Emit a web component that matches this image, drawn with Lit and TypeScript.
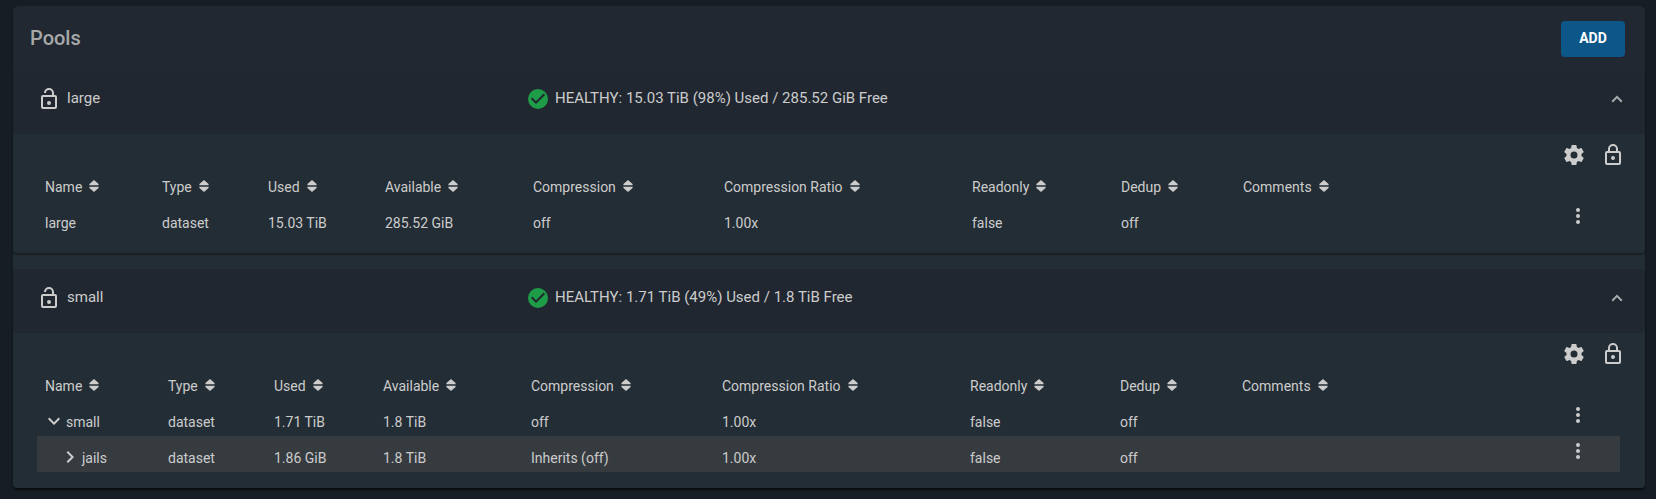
import { LitElement, html, css, svg, nothing } from "lit";
import { customElement, property, state } from "lit/decorators.js";

interface Dataset {
  name: string;
  level: number;
  tree?: "open" | "closed";
  hovered?: boolean;
  values: string[];
}

interface Pool {
  name: string;
  status: string;
  weights: number[];
  datasets: Dataset[];
}

const COLUMNS = [
  "Name",
  "Type",
  "Used",
  "Available",
  "Compression",
  "Compression Ratio",
  "Readonly",
  "Dedup",
  "Comments",
];

const POOLS: Pool[] = [
  {
    name: "large",
    status: "HEALTHY: 15.03 TiB (98%) Used / 285.52 GiB Free",
    weights: [117, 106, 117, 148, 191, 248, 149, 122, 120, 265],
    datasets: [
      {
        name: "large",
        level: 0,
        values: ["dataset", "15.03 TiB", "285.52 GiB", "off", "1.00x", "false", "off", ""],
      },
    ],
  },
  {
    name: "small",
    status: "HEALTHY: 1.71 TiB (49%) Used / 1.8 TiB Free",
    weights: [123, 106, 109, 148, 191, 248, 150, 122, 120, 266],
    datasets: [
      {
        name: "small",
        level: 0,
        tree: "open",
        values: ["dataset", "1.71 TiB", "1.8 TiB", "off", "1.00x", "false", "off", ""],
      },
      {
        name: "jails",
        level: 1,
        tree: "closed",
        hovered: true,
        values: ["dataset", "1.86 GiB", "1.8 TiB", "Inherits (off)", "1.00x", "false", "off", ""],
      },
    ],
  },
];

const ICONS = {
  unlocked: svg`<path d="M12 18a2 2 0 1 0 0-4 2 2 0 0 0 0 4zM18 8h-1V6A5 5 0 0 0 7 6h2a3 3 0 0 1 6 0v2H6a2 2 0 0 0-2 2v10a2 2 0 0 0 2 2h12a2 2 0 0 0 2-2V10a2 2 0 0 0-2-2zm0 12H6V10h12z"/>`,
  locked: svg`<path d="M12 17a2 2 0 1 0 0-4 2 2 0 0 0 0 4zM18 8h-1V6A5 5 0 0 0 7 6v2H6a2 2 0 0 0-2 2v10a2 2 0 0 0 2 2h12a2 2 0 0 0 2-2V10a2 2 0 0 0-2-2zM9 6a3 3 0 0 1 6 0v2H9zm9 14H6V10h12z"/>`,
  gear: svg`<path d="M19.43 12.98c.04-.32.07-.64.07-.98s-.03-.66-.07-.98l2.11-1.65c.19-.15.24-.42.12-.64l-2-3.46c-.12-.22-.39-.3-.61-.22l-2.49 1c-.52-.4-1.08-.73-1.69-.98l-.38-2.65A.49.49 0 0 0 14 2h-4c-.25 0-.46.18-.49.42l-.38 2.65c-.61.25-1.17.59-1.69.98l-2.49-1c-.23-.09-.49 0-.61.22l-2 3.46c-.13.22-.07.49.12.64l2.11 1.65c-.04.32-.07.65-.07.98s.03.66.07.98l-2.11 1.65c-.19.15-.24.42-.12.64l2 3.46c.12.22.39.3.61.22l2.49-1c.52.4 1.08.73 1.69.98l.38 2.65c.03.24.24.42.49.42h4c.25 0 .46-.18.49-.42l.38-2.65c.61-.25 1.17-.59 1.69-.98l2.49 1c.23.09.49 0 .61-.22l2-3.46c.12-.22.07-.49-.12-.64zM12 15.500a3.500 3.500 0 1 1 0-7 3.500 3.500 0 0 1 0 7z"/>`,
  check: svg`<path d="M12 2a10 10 0 1 0 0 20 10 10 0 0 0 0-20zm-2 15l-5-5 1.410-1.410L10 14.170l7.590-7.590L19 8z"/>`,
  dots: svg`<path d="M12 8a2 2 0 1 0 0-4 2 2 0 0 0 0 4zm0 2a2 2 0 1 0 0 4 2 2 0 0 0 0-4zm0 6a2 2 0 1 0 0 4 2 2 0 0 0 0-4z"/>`,
  down: svg`<path d="M7.410 8.590L12 13.170l4.590-4.580L18 10l-6 6-6-6z"/>`,
  right: svg`<path d="M8.590 16.590L13.170 12 8.590 7.410 10 6l6 6-6 6z"/>`,
  collapse: svg`<path d="M12 8.500l5.500 5.500-1.400 1.400L12 11.300l-4.100 4.100L6.500 14z"/>`,
};

const icon = (name: keyof typeof ICONS) =>
  html`<svg class="icon icon-${name}" viewBox="0 0 24 24" aria-hidden="true">${ICONS[name]}</svg>`;

@customElement("pool-panel")
export class PoolPanel extends LitElement {
  @property({ attribute: false }) pool!: Pool;
  @state() private expanded = true;

  static styles = css`
    :host {
      display: block;
      background: #232d35;
      border-radius: 4px;
      box-shadow: 0 2px 2px rgba(0, 0, 0, 0.3);
    }
    button {
      display: inline-flex;
      align-items: center;
      margin: 0;
      padding: 0;
      border: 0;
      background: none;
      color: inherit;
      font: inherit;
      cursor: pointer;
    }
    .icon {
      display: block;
      width: 24px;
      height: 24px;
      fill: #cccccc;
    }
    .header {
      display: grid;
      grid-template-columns: 489fr 1079fr 24px;
      align-items: start;
      padding: 17px 16px 23px 24px;
      background: #202730;
      border-radius: 4px;
      font-size: 15px;
      line-height: 22px;
    }
    .title,
    .status {
      display: flex;
      align-items: flex-start;
    }
    .title {
      gap: 6px;
      margin: 0;
      font-size: inherit;
      font-weight: 400;
    }
    .status {
      gap: 5px;
    }
    .icon-check {
      fill: #1f9c48;
    }
    .icon-collapse {
      fill: #a9abad;
    }
    .content {
      padding-bottom: 16px;
    }
    .actions {
      display: flex;
      justify-content: flex-end;
      gap: 15px;
      padding: 9px 20px 0 24px;
    }
    .table-wrap {
      padding: 0 25px 0 24px;
    }
    table {
      width: 100%;
      table-layout: fixed;
      border-collapse: collapse;
      font-size: 14px;
      line-height: 20px;
    }
    th,
    td {
      height: 36px;
      box-sizing: border-box;
      padding: 12px 0 4px 8px;
      text-align: left;
      vertical-align: top;
      font-weight: 400;
      white-space: nowrap;
    }
    thead th,
    thead td {
      height: 34px;
      padding: 10px 0 4px 8px;
    }
    .sort {
      gap: 7px;
      vertical-align: top;
    }
    .sort-icon {
      width: 10px;
      height: 12px;
      margin-bottom: 2px;
      fill: #cccccc;
    }
    .hovered {
      background: #363b40;
    }
    .name {
      display: flex;
      align-items: center;
    }
    .tree {
      margin-left: -3px;
    }
    .level-1 {
      padding-left: 16px;
    }
    .tree button {
      height: 20px;
      margin-top: -2px;
    }
    td.menu {
      padding: 3px 30px 0 0;
    }
    .menu button {
      display: flex;
      margin-left: auto;
    }
  `;

  private toggle() {
    this.expanded = !this.expanded;
  }

  private renderRow(row: Dataset) {
    return html`
      <tr class=${row.hovered ? "hovered" : ""}>
        <td>
          <div class="name level-${row.level} ${row.tree ? "tree" : ""}">
            ${row.tree
              ? html`<button type="button" aria-label="Toggle ${row.name}">
                  ${icon(row.tree === "open" ? "down" : "right")}
                </button>`
              : nothing}
            <span>${row.name}</span>
          </div>
        </td>
        ${row.values.map((value) => html`<td>${value}</td>`)}
        <td class="menu">
          <button type="button" aria-label="Actions for ${row.name}">${icon("dots")}</button>
        </td>
      </tr>
    `;
  }

  private renderContent() {
    const { weights, datasets } = this.pool;
    const total = weights.reduce((sum, w) => sum + w, 0);
    return html`
      <div class="content">
        <div class="actions">
          <button type="button" aria-label="Pool settings">${icon("gear")}</button>
          <button type="button" aria-label="Encryption">${icon("locked")}</button>
        </div>
        <div class="table-wrap">
          <table>
            <colgroup>
              ${weights.map((w) => html`<col style="width: ${(w / total) * 100}%" />`)}
            </colgroup>
            <thead>
              <tr>
                ${COLUMNS.map(
                  (label) => html`<th scope="col">
                    <button class="sort" type="button">
                      ${label}
                      <svg class="sort-icon" viewBox="0 0 10 12" aria-hidden="true">
                        <path d="M5 0l4.600 4v1.200H.400V4zM5 12L.400 8V6.800h9.200V8z" />
                      </svg>
                    </button>
                  </th>`
                )}
                <td></td>
              </tr>
            </thead>
            <tbody>
              ${datasets.map((row) => this.renderRow(row))}
            </tbody>
          </table>
        </div>
      </div>
    `;
  }

  render() {
    return html`
      <div class="header">
        <h2 class="title">${icon("unlocked")}<span>${this.pool.name}</span></h2>
        <div class="status">${icon("check")}<span>${this.pool.status}</span></div>
        <button
          type="button"
          aria-label="Toggle pool ${this.pool.name}"
          aria-expanded=${this.expanded}
          @click=${this.toggle}
        >
          ${icon("collapse")}
        </button>
      </div>
      ${this.expanded ? this.renderContent() : nothing}
    `;
  }
}

@customElement("app-root")
export class AppRoot extends LitElement {
  static styles = css`
    :host {
      display: block;
      box-sizing: border-box;
      min-height: 100vh;
      padding: 6px 11px 11px 13px;
      background: #171d24;
      color: #cccccc;
      font-family: Roboto, sans-serif;
    }
    .card {
      background: #232d35;
      border-radius: 6px;
      box-shadow: 0 2px 2px rgba(0, 0, 0, 0.4);
    }
    .toolbar {
      display: flex;
      align-items: center;
      justify-content: space-between;
      padding: 15px 20px 13px 17px;
      background: #212831;
      border-radius: 6px 6px 0 0;
    }
    h1 {
      margin: 0 0 2px;
      color: #a6a8aa;
      font-size: 20px;
      font-weight: 500;
      line-height: 24px;
    }
    .add {
      height: 36px;
      min-width: 64px;
      padding: 0 16px 2px;
      border: 0;
      border-radius: 4px;
      background: #0d5788;
      color: #ffffff;
      font: 700 14px/20px Roboto, sans-serif;
      cursor: pointer;
    }
    .pools {
      display: flex;
      flex-direction: column;
      gap: 16px;
    }
  `;

  render() {
    return html`
      <main class="card">
        <div class="toolbar">
          <h1>Pools</h1>
          <button class="add" type="button">ADD</button>
        </div>
        <div class="pools">
          ${POOLS.map((pool) => html`<pool-panel .pool=${pool}></pool-panel>`)}
        </div>
      </main>
    `;
  }
}
